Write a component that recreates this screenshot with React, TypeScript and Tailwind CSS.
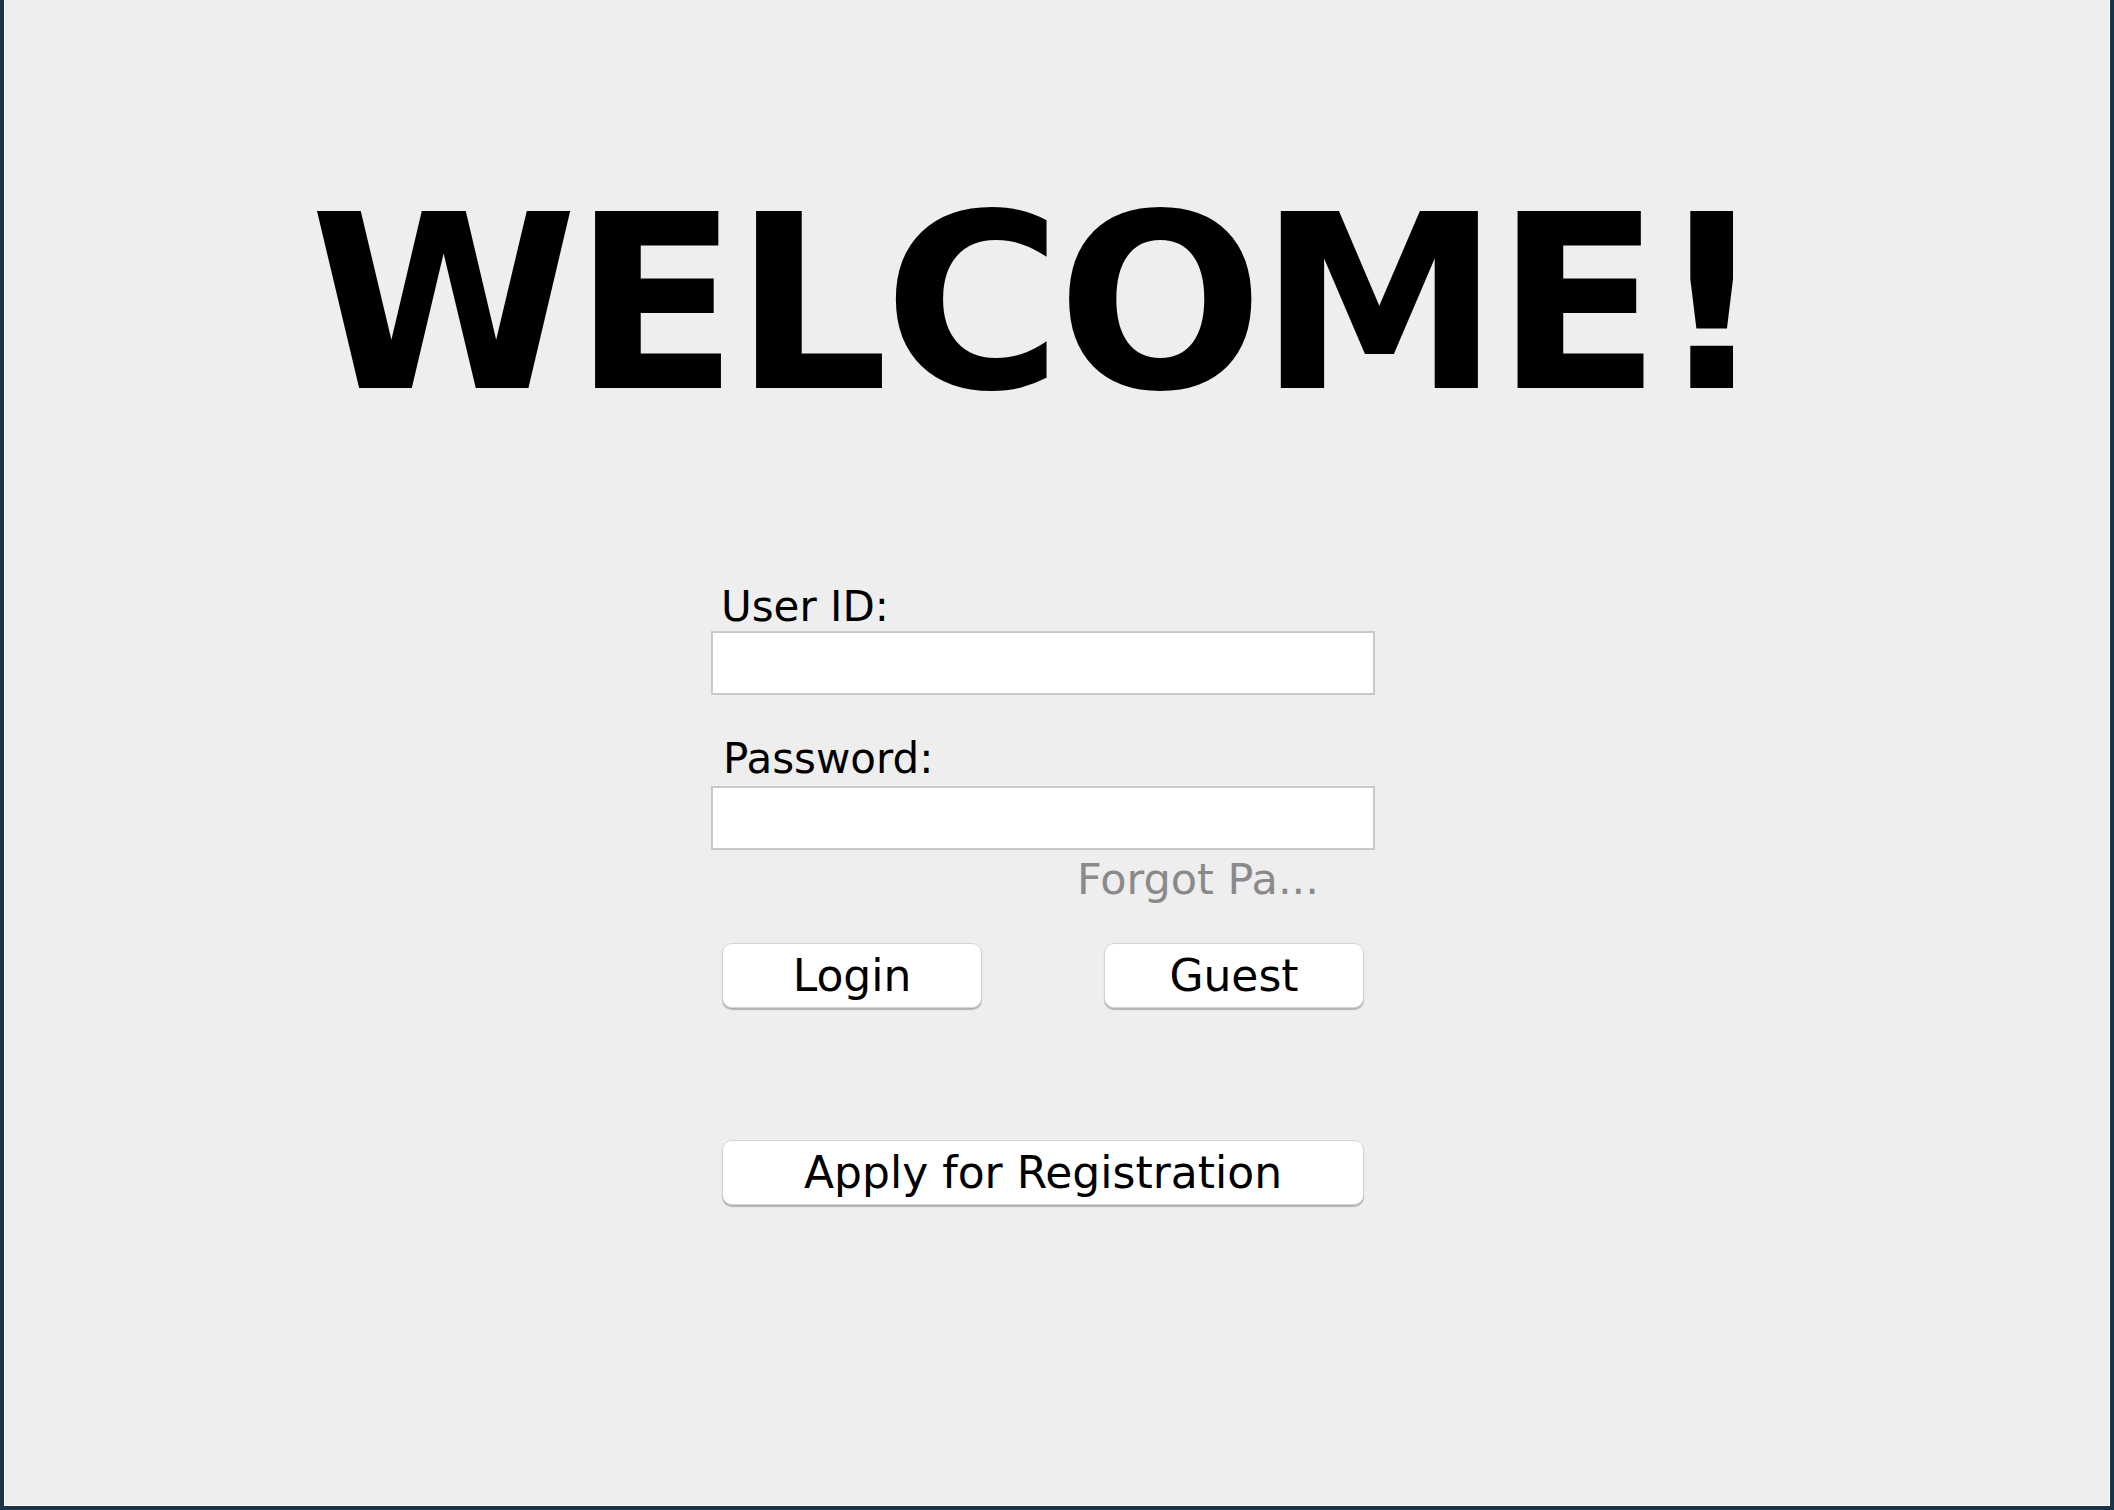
export default function App() {
  return (
    <div className="flex h-screen w-full bg-[#1b3447] pb-[4px] pl-[4px] pr-[4px]">
      <div
        className="flex flex-1 flex-col border-b border-l border-r border-white bg-[#eeeeee] text-black"
        style={{ fontFamily: '"DejaVu Sans", Verdana, sans-serif' }}
      >
        <h1 className="mt-[182px] pr-[42px] text-center text-[243px] font-bold leading-none tracking-[-5px]">
          WELCOME!
        </h1>

        <form className="ml-[706px] mt-[161px] flex w-[664px] flex-col">
          <label className="ml-[10px] text-[42px] leading-none">User ID:</label>
          <input
            type="text"
            className="mt-[3px] h-[64px] w-full border-2 border-[#c9c9c9] bg-white outline-none"
          />

          <label className="ml-[12px] mt-[43px] text-[42px] leading-none">Password:</label>
          <input
            type="password"
            className="mt-[6px] h-[64px] w-full border-2 border-[#c9c9c9] bg-white outline-none"
          />

          <span className="ml-[366px] mt-[8px] text-[43px] leading-none text-[#8a8a8a]">
            Forgot Pa...
          </span>

          <div className="ml-[11px] mt-[42px] flex w-[642px] justify-between">
            <button
              type="button"
              className="flex h-[65px] w-[260px] items-center justify-center rounded-[10px] border border-[#d4d4d4] bg-white text-[44px] leading-none shadow-[0_2px_1px_rgba(0,0,0,0.25)]"
            >
              Login
            </button>
            <button
              type="button"
              className="flex h-[65px] w-[260px] items-center justify-center rounded-[10px] border border-[#d4d4d4] bg-white text-[44px] leading-none shadow-[0_2px_1px_rgba(0,0,0,0.25)]"
            >
              Guest
            </button>
          </div>

          <button
            type="button"
            className="ml-[11px] mt-[132px] flex h-[65px] w-[642px] items-center justify-center rounded-[10px] border border-[#d4d4d4] bg-white text-[44px] leading-none shadow-[0_2px_1px_rgba(0,0,0,0.25)]"
          >
            Apply for Registration
          </button>
        </form>
      </div>
    </div>
  );
}
